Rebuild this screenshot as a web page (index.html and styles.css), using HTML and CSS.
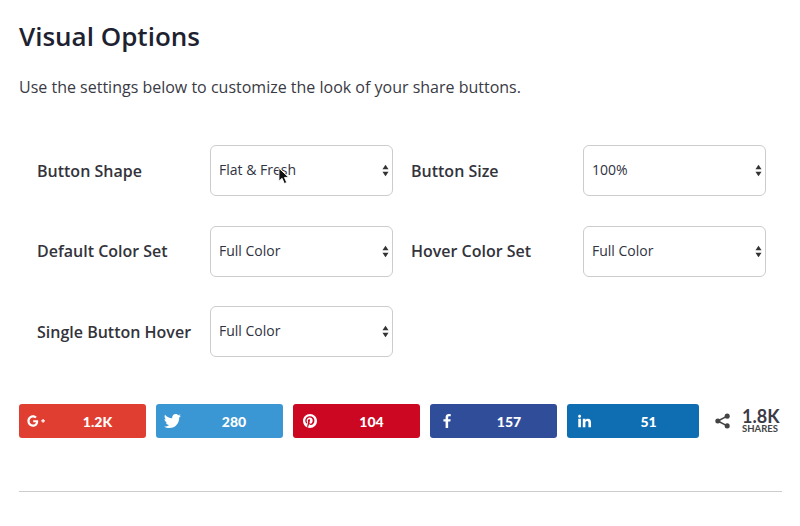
FILE: index.html
```html
<!DOCTYPE html>
<html lang="en">
<head>
<meta charset="utf-8">
<title>Visual Options</title>
<link rel="stylesheet" href="styles.css">
</head>
<body>
<main class="page">
  <h1 class="title">Visual Options</h1>
  <p class="intro">Use the settings below to customize the look of your share buttons.</p>
  <section class="options">
    <label class="opt-label">Button Shape</label>
    <div class="select-box"><span>Flat &amp; Fresh</span><svg class="arrows" viewBox="0 0 8 14"><path d="M4 0.5L7.5 5.5H0.5Z"/><path d="M4 13.5L7.5 8.5H0.5Z"/></svg>
      <svg class="cursor" viewBox="0 0 14 20"><path d="M1 1V15L4.4 12L6.8 17.6L9.4 16.5L7 11H11.6Z" fill="#111" stroke="#fff" stroke-width="1"/></svg>
    </div>
    <label class="opt-label">Button Size</label>
    <div class="select-box"><span>100%</span><svg class="arrows" viewBox="0 0 8 14"><path d="M4 0.5L7.5 5.5H0.5Z"/><path d="M4 13.5L7.5 8.5H0.5Z"/></svg></div>
    <label class="opt-label">Default Color Set</label>
    <div class="select-box"><span>Full Color</span><svg class="arrows" viewBox="0 0 8 14"><path d="M4 0.5L7.5 5.5H0.5Z"/><path d="M4 13.5L7.5 8.5H0.5Z"/></svg></div>
    <label class="opt-label">Hover Color Set</label>
    <div class="select-box"><span>Full Color</span><svg class="arrows" viewBox="0 0 8 14"><path d="M4 0.5L7.5 5.5H0.5Z"/><path d="M4 13.5L7.5 8.5H0.5Z"/></svg></div>
    <label class="opt-label">Single Button Hover</label>
    <div class="select-box"><span>Full Color</span><svg class="arrows" viewBox="0 0 8 14"><path d="M4 0.5L7.5 5.5H0.5Z"/><path d="M4 13.5L7.5 8.5H0.5Z"/></svg></div>
  </section>
  <section class="shares">
    <a class="btn gplus">
      <svg class="icon" viewBox="0 0 20 14" width="20" height="14"><path d="M11 6.2H6.2V8.2H9C8.6 9.7 7.5 10.6 6 10.6C4.1 10.6 2.6 9 2.6 7S4.1 3.4 6 3.4C6.9 3.4 7.7 3.7 8.3 4.3L9.8 2.8C8.8 1.9 7.5 1.3 6 1.3C2.9 1.3 0.4 3.9 0.4 7S2.9 12.7 6 12.7C9.2 12.7 11.2 10.5 11.2 7.2C11.2 6.8 11.1 6.5 11 6.2Z" fill="#fff"/><path d="M15.500 5V6.300H14.200V7.500H15.500V8.800H16.700V7.500H18V6.300H16.700V5Z" fill="#fff"/></svg>
      <span class="count">1.2K</span></a>
    <a class="btn twitter">
      <svg class="icon" viewBox="0 0 24 20" width="17" height="14"><path d="M24 2.4C23.1 2.8 22.2 3 21.2 3.2C22.2 2.6 23 1.600 23.400 0.500C22.400 1.100 21.400 1.500 20.200 1.700C19.300 0.700 18 0 16.500 0C13.700 0 11.500 2.300 11.500 5C11.500 5.400 11.500 5.800 11.600 6.100C7.500 5.900 3.800 3.900 1.400 0.900C1 1.600 0.700 2.500 0.700 3.400C0.700 5.100 1.600 6.700 2.900 7.600C2.100 7.600 1.300 7.400 0.600 7V7.100C0.600 9.500 2.300 11.600 4.600 12C4.200 12.100 3.800 12.200 3.300 12.200C3 12.200 2.700 12.200 2.400 12.100C3 14.100 4.900 15.500 7 15.600C5.300 17 3.100 17.800 0.800 17.800C0.500 17.800 0.200 17.800 0 17.700C2.200 19.100 4.800 20 7.600 20C16.600 20 21.600 12.300 21.600 5.600V5C22.500 4.300 23.400 3.400 24 2.400Z" fill="#fff"/></svg>
      <span class="count">280</span></a>
    <a class="btn pinterest">
      <svg class="icon" viewBox="0 0 24 24" width="14" height="14"><path fill-rule="evenodd" d="M12 0C5.400 0 0 5.400 0 12C0 17 3 21.300 7.400 23.100C7.300 22.200 7.200 20.700 7.400 19.700L8.800 13.700C8.800 13.700 8.400 13 8.400 11.900C8.400 10.200 9.400 9 10.600 9C11.600 9 12.100 9.800 12.100 10.700C12.100 11.700 11.400 13.200 11.100 14.600C10.800 15.800 11.700 16.700 12.800 16.700C15 16.700 16.600 14.400 16.600 11.100C16.600 8.200 14.500 6.200 11.600 6.200C8.200 6.200 6.200 8.700 6.200 11.400C6.200 12.400 6.600 13.500 7.100 14.100C7.200 14.200 7.200 14.300 7.200 14.400L6.800 15.900C6.700 16.200 6.600 16.200 6.300 16.100C4.800 15.400 3.900 13.200 3.900 11.400C3.900 7.500 6.700 3.900 12 3.900C16.300 3.900 19.600 7 19.600 11C19.600 15.300 16.900 18.700 13.200 18.700C11.900 18.700 10.700 18 10.300 17.200L9.500 20.100C9.200 21.200 8.500 22.500 8 23.300C9.200 23.700 10.600 24 12 24C18.600 24 24 18.600 24 12S18.600 0 12 0Z" fill="#fff"/></svg>
      <span class="count">104</span></a>
    <a class="btn facebook">
      <svg class="icon icon-f" viewBox="0 0 9 16" width="8" height="14"><path d="M5.800 16V8.700H8.300L8.700 5.900H5.800V4.100C5.800 3.300 6 2.700 7.200 2.700H8.800V0.200C8.500 0.100 7.600 0 6.600 0C4.400 0 2.900 1.300 2.900 3.800V5.900H0.400V8.700H2.900V16Z" fill="#fff"/></svg>
      <span class="count">157</span></a>
    <a class="btn linkedin">
      <svg class="icon" viewBox="0 0 16 14" width="15" height="14"><path d="M0.300 4.700H3.100V13.700H0.300ZM1.700 0.300C2.600 0.300 3.300 1 3.300 1.900S2.600 3.500 1.700 3.500S0.100 2.800 0.100 1.900S0.800 0.300 1.700 0.300ZM5.100 4.700H7.800V5.900C8.200 5.200 9.100 4.500 10.500 4.500C13.300 4.500 13.900 6.400 13.900 8.800V13.700H11.100V9.300C11.100 8.300 11 7 9.600 7C8.200 7 7.900 8.100 7.900 9.200V13.700H5.100Z" fill="#fff"/></svg>
      <span class="count">51</span></a>
    <div class="total">
      <svg class="share-icon" viewBox="0 0 16 16" width="15" height="16"><circle cx="3" cy="8" r="2.700"/><circle cx="13" cy="2.800" r="2.700"/><circle cx="13" cy="13.200" r="2.700"/><path d="M3 8L13 2.800M3 8L13 13.200" stroke="#444" stroke-width="1.600" fill="none"/></svg>
      <div class="total-text"><span class="total-num">1.8K</span><span class="total-lbl">SHARES</span></div>
    </div>
  </section>
  <hr class="rule">
</main>
</body>
</html>
```
FILE: styles.css
```css
html, body { margin: 0; padding: 0; background: #fff; overflow: hidden; }
body { width: 800px; height: 526px; font-family: "Open Sans", sans-serif; color: #33333b; }
.page { padding: 19px 18px 0 19px; }
.title { margin: 0; font-size: 26px; line-height: 34px; font-weight: 600; color: #1e2230; }
.intro { margin: 23px 0 0; font-size: 16px; line-height: 22px; color: #3a3a44; }
.options {
  margin: 47px 0 0 18px;
  display: grid;
  grid-template-columns: 173px 183px 190px 183px;
  grid-auto-rows: 51px;
  row-gap: 29.5px;
  align-items: center;
}
.opt-label { font-size: 16px; font-weight: 600; color: #33333b; line-height: 22px; }
.options .opt-label:nth-child(4n+3) { padding-left: 18px; }
.select-box {
  position: relative;
  box-sizing: border-box;
  height: 51px;
  border: 1px solid #ccc;
  border-radius: 6px;
  padding: 0 3px 0 8px;
  display: flex;
  align-items: center;
  justify-content: space-between;
  font-size: 14px;
  color: #2f3342;
  background: #fff;
}
.select-box span { position: relative; top: -1px; }
.arrows { width: 7px; height: 13px; fill: #333; flex: none; }
.cursor { position: absolute; left: 67px; top: 21px; width: 13px; height: 19px; }
.shares { margin-top: 47px; display: flex; align-items: center; gap: 10px; height: 34px; }
.btn {
  box-sizing: border-box;
  width: 127px;
  height: 34px;
  border-radius: 3px;
  display: flex;
  align-items: center;
  padding-left: 8px;
  color: #fff;
  font-family: Lato, sans-serif;
  font-weight: 900;
  font-size: 14px;
}
.icon { flex: none; display: block; }
.icon-f { margin-left: 5px; }
.count { flex: 1; text-align: center; }
.gplus { background: #df3e30; }
.gplus .count { padding-left: 2px; }
.twitter { background: #3a97d4; }
.twitter .count { padding-left: 4px; }
.pinterest { background: #cb0722; padding-left: 10px; }
.pinterest .count { padding-left: 6px; }
.facebook { background: #304d9a; }
.facebook .count { padding-left: 10px; }
.linkedin { background: #0f6eb1; width: 132px; padding-left: 11px; }
.linkedin .count { padding-left: 5px; }
.total { display: flex; align-items: center; margin-left: 6px; gap: 12px; color: #444; font-family: Lato, sans-serif; }
.share-icon { fill: #444; display: block; }
.total-text { display: flex; flex-direction: column; align-items: flex-start; }
.total-num { font-size: 18px; line-height: 16px; font-weight: 700; color: #3c3c46; }
.total-lbl { font-size: 9.5px; line-height: 10px; font-weight: 700; }
.rule { margin: 53px 0 0; border: 0; border-top: 1px solid #ccc; }
```
